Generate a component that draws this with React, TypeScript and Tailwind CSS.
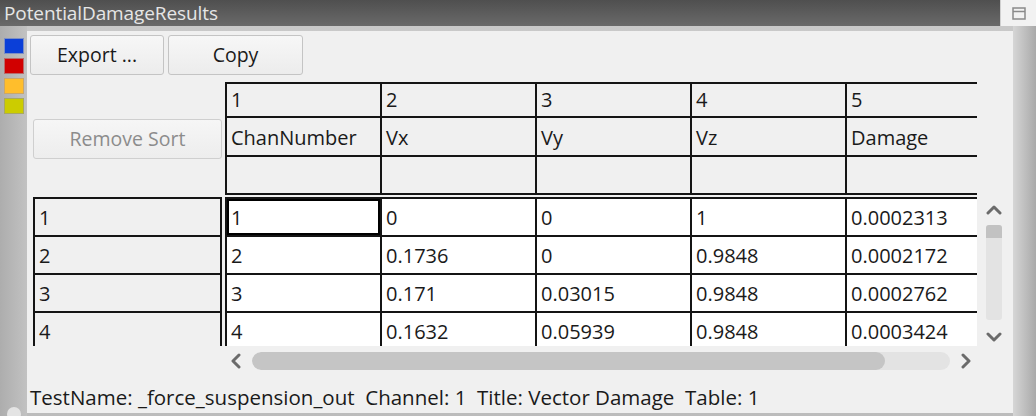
import React from 'react';

const cols = [
  { n: '1', name: 'ChanNumber' },
  { n: '2', name: 'Vx' },
  { n: '3', name: 'Vy' },
  { n: '4', name: 'Vz' },
  { n: '5', name: 'Damage' },
];

const rows = [
  ['1', '0', '0', '1', '0.0002313'],
  ['2', '0.1736', '0', '0.9848', '0.0002172'],
  ['3', '0.171', '0.03015', '0.9848', '0.0002762'],
  ['4', '0.1632', '0.05939', '0.9848', '0.0003424'],
];

const font = { fontFamily: '"Open Sans", "Noto Sans", sans-serif' };

function Chevron({ dir }: { dir: 'left' | 'right' | 'up' | 'down' }) {
  const pts = {
    left: '9,2 3,8 9,14',
    right: '3,2 9,8 3,14',
    up: '2,10 8,4 14,10',
    down: '2,5 8,11 14,5',
  }[dir];
  const vb = dir === 'left' || dir === 'right' ? '0 0 12 16' : '0 0 16 14';
  const size = dir === 'left' || dir === 'right' ? 'w-[12px] h-[16px]' : 'w-[16px] h-[14px]';
  return (
    <svg viewBox={vb} className={size}>
      <polyline points={pts} fill="none" stroke="#6b6b6b" strokeWidth={3} strokeLinecap="round" strokeLinejoin="round" />
    </svg>
  );
}

export default function App() {
  return (
    <div className="w-[1036px] h-[416px] overflow-hidden flex flex-col bg-[#bdbdbd] text-[#1a1a1a]" style={font}>
      {/* title bar */}
      <div className="h-[26px] flex shrink-0">
        <div className="flex-1 bg-gradient-to-b from-[#4f4f4f] to-[#6a6a6a] flex items-center pl-[4px]">
          <span className="text-[19px] leading-none text-[#e6e6e6] tracking-[-0.1px]">PotentialDamageResults</span>
        </div>
        <div className="w-[36px] bg-[#f2f2f2] flex items-center justify-center border-l border-[#d0d0d0]">
          <svg viewBox="0 0 14 13" className="w-[14px] h-[13px]">
            <rect x="1" y="1" width="12" height="11" fill="none" stroke="#8a8a8a" strokeWidth={1.5} />
            <line x1="1" y1="4.5" x2="13" y2="4.5" stroke="#8a8a8a" strokeWidth={1.5} />
          </svg>
        </div>
      </div>

      <div className="flex flex-1 bg-gradient-to-b from-[#c9c9c9] to-[#bcbcbc] pt-[5px]">
        {/* left strip */}
        <div className="w-[27px] shrink-0 flex flex-col items-center gap-[4px] bg-gradient-to-r from-[#adadad] to-[#c2c2c2] -mt-[5px] pt-[12px]">
          <div className="w-[20px] h-[16px] bg-[#0b3fd8] border border-[#7d8fc4]" />
          <div className="w-[20px] h-[16px] bg-[#d10000] border border-[#b96b6b]" />
          <div className="w-[20px] h-[16px] bg-[#ffbe2c] border border-[#c9a76a]" />
          <div className="w-[20px] h-[16px] bg-[#cccc00] border border-[#a8a860]" />
          <div className="flex-1" />
          <div className="w-[14px] h-[14px] rounded-full bg-[#e4e4e4] -mb-[5px]" />
        </div>

        {/* main panel */}
        <div className="w-[986px] h-[382px] shrink-0 bg-[#f0f0f0] flex flex-col">
          <div className="flex gap-[4px] pl-[3px] pt-[4px] h-[44px]">
            <button className="w-[134px] h-[40px] rounded-[3px] border border-[#c4c4c4] bg-gradient-to-b from-[#f7f7f7] to-[#ececec] text-[19.5px]">Export ...</button>
            <button className="w-[135px] h-[40px] rounded-[3px] border border-[#c4c4c4] bg-gradient-to-b from-[#f7f7f7] to-[#ececec] text-[19.5px]">Copy</button>
          </div>

          {/* header section */}
          <div className="flex mt-[7px] h-[113px]">
            <div className="w-[189px] ml-[6px] pt-[37px]">
              <button className="w-[189px] h-[40px] rounded-[3px] border border-[#cfcfcf] bg-gradient-to-b from-[#f6f6f6] to-[#ededed] text-[19.5px] text-[#8c8c8c]">Remove Sort</button>
            </div>
            <div className="ml-[3px] w-[752px] overflow-hidden">
              <div className="flex flex-col border-t-2 border-l-2 border-[#141414] w-max text-[20px]">
                <div className="flex">
                  {cols.map((c) => (
                    <div key={c.n} className="w-[155px] h-[34px] border-r-2 border-b-2 border-[#141414] pl-[4px] flex items-center">{c.n}</div>
                  ))}
                </div>
                <div className="flex">
                  {cols.map((c) => (
                    <div key={c.n} className="w-[155px] h-[39px] border-r-2 border-b-2 border-[#141414] pl-[4px] pt-[3px] flex items-center">{c.name}</div>
                  ))}
                </div>
                <div className="flex">
                  {cols.map((c) => (
                    <div key={c.n} className="w-[155px] h-[38px] border-r-2 border-b-2 border-[#141414]" />
                  ))}
                </div>
              </div>
            </div>
          </div>

          {/* data section */}
          <div className="flex mt-[2px] h-[149px]">
            <div className="w-[189px] ml-[6px] overflow-hidden">
              <div className="border-t-2 border-l-2 border-r-2 border-[#141414] text-[20px]">
                {rows.map((r) => (
                  <div key={r[0]} className="h-[38px] border-b-2 border-[#141414] pl-[4px] pt-[1px] flex items-center">{r[0]}</div>
                ))}
              </div>
            </div>
            <div className="ml-[3px] w-[752px] overflow-hidden">
              <div className="border-t-2 border-l-2 border-[#141414] w-max text-[20px]">
                {rows.map((r, ri) => (
                  <div key={ri} className="flex">
                    {r.map((v, ci) => (
                      <div
                        key={ci}
                        className={
                          'w-[155px] h-[38px] border-r-2 border-b-2 border-[#141414] bg-white pl-[4px] pt-[1px] flex items-center ' +
                          (ri === 0 && ci === 0 ? 'shadow-[inset_0_0_0_2px_#000]' : '')
                        }
                      >
                        {v}
                      </div>
                    ))}
                  </div>
                ))}
              </div>
            </div>
            <div className="ml-[8px] w-[18px] flex flex-col items-center pt-[6px]">
              <Chevron dir="up" />
              <div className="mt-[8px] w-[16px] h-[95px] rounded-[3px] bg-[#e3e3e3] overflow-hidden">
                <div className="h-[13px] bg-[#c2c2c2]" />
              </div>
              <div className="mt-[9px]">
                <Chevron dir="down" />
              </div>
            </div>
          </div>

          {/* horizontal scrollbar */}
          <div className="h-[30px] flex items-center pl-[203px]">
            <Chevron dir="left" />
            <div className="ml-[10px] w-[698px] h-[18px] rounded-full bg-[#e3e3e3] overflow-hidden">
              <div className="w-[633px] h-full rounded-full bg-[#c5c5c5]" />
            </div>
            <div className="ml-[10px]">
              <Chevron dir="right" />
            </div>
          </div>

          {/* status line */}
          <div className="flex-1 flex items-center pl-[3px] pt-[6px] text-[20.5px] whitespace-pre">
            TestName: _force_suspension_out  Channel: 1  Title: Vector Damage  Table: 1
          </div>
        </div>

        {/* right strip */}
        <div className="flex-1 bg-gradient-to-r from-[#d6d6d6] to-[#a9a9a9] -mt-[5px]" />
      </div>
    </div>
  );
}
